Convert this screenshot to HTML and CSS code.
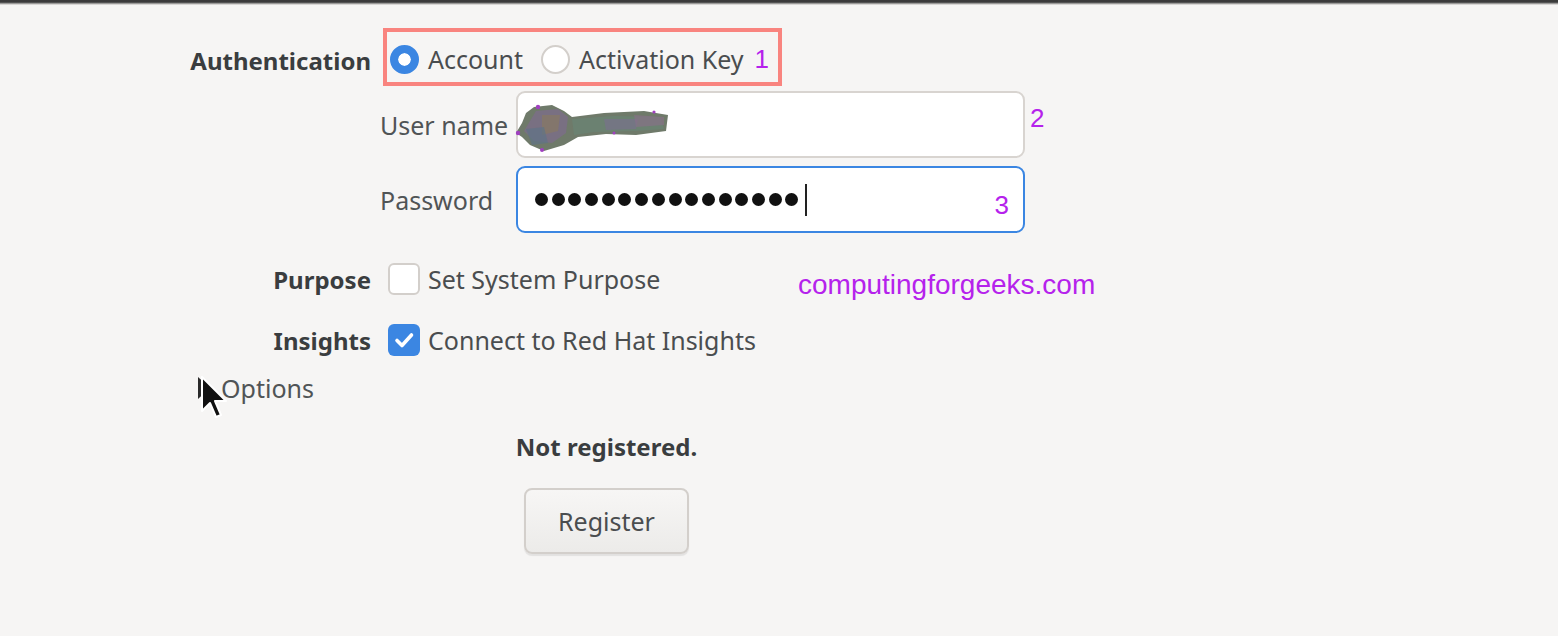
FILE: index.html
```html
<!DOCTYPE html>
<html lang="en">
<head>
<meta charset="utf-8">
<title>Registration</title>
<link rel="stylesheet" href="styles.css">
</head>
<body>
<div class="topbar"></div>
<main class="page">
  <div class="row auth-row">
    <span class="label">Authentication</span>
    <div class="radio-group">
      <span class="radio checked"><span class="radio-dot"></span>Account</span>
      <span class="radio"><span class="radio-dot"></span>Activation Key</span>
      <span class="note">1</span>
    </div>
  </div>

  <div class="row creds-row">
    <span class="label"></span>
    <div class="creds">
      <span class="clabel">User name</span>
      <div class="entry-wrap">
        <div class="entry">
          <svg class="scribble" width="160" height="50" viewBox="0 0 160 50">
            <path d="M20 4 L38 2 L50 8 L58 14 L90 10 L130 8 L154 12 L152 28 L122 32 L92 31 L64 34 L50 42 L30 48 L16 42 L8 34 L2 30 L8 20 L12 10 Z" fill="#6f7a6a"/>
            <path d="M22 8 L44 6 L54 14 L52 30 L38 40 L20 38 L10 28 Z" fill="#7b6f86" opacity="0.85"/>
            <path d="M58 16 L100 13 L146 14 L150 26 L122 28 L80 29 L60 32 Z" fill="#6a8272" opacity="0.9"/>
            <path d="M28 12 L46 12 L44 28 L28 32 Z" fill="#8a7a5e" opacity="0.6"/>
            <path d="M90 16 L124 16 L122 26 L92 27 Z" fill="#7a7090" opacity="0.6"/>
            <path d="M12 26 L30 24 L34 40 L18 42 Z" fill="#5f7386" opacity="0.7"/>
            <path d="M120 12 L150 14 L150 22 L122 24 Z" fill="#8a6f8a" opacity="0.6"/>
            <circle cx="24" cy="4" r="2.2" fill="#a040c0"/>
            <circle cx="4" cy="30" r="2.2" fill="#a040c0"/>
            <circle cx="28" cy="47" r="2" fill="#a040c0"/>
            <circle cx="140" cy="9" r="1.6" fill="#a040c0"/>
            <circle cx="100" cy="30" r="1.5" fill="#a040c0"/>
          </svg>
        </div>
        <span class="note note-2">2</span>
      </div>
      <span class="clabel">Password</span>
      <div class="entry-wrap">
        <div class="entry focused">
          <div class="dots">
            <i></i><i></i><i></i><i></i><i></i><i></i><i></i><i></i>
            <i></i><i></i><i></i><i></i><i></i><i></i><i></i><i></i>
          </div>
          <span class="caret"></span>
          <span class="note note-3">3</span>
        </div>
      </div>
    </div>
  </div>

  <div class="row purpose-row">
    <span class="label">Purpose</span>
    <span class="check"><span class="box"></span>Set System Purpose</span>
  </div>

  <div class="row insights-row">
    <span class="label">Insights</span>
    <span class="check"><span class="box checked">
      <svg width="32" height="32" viewBox="0 0 32 32"><path d="M9 16.5 L14 21.5 L23.5 11" fill="none" stroke="#fff" stroke-width="3.6" stroke-linecap="round" stroke-linejoin="round"/></svg>
    </span>Connect to Red Hat Insights</span>
  </div>

  <div class="options-row">
    <span class="expander"></span>
    <span class="options-text">Options</span>
    <svg class="pointer" width="30" height="46" viewBox="0 0 30 46">
      <path d="M3 2 L3 36 L11 28 L17 42 L22 40 L16 26 L27 26 Z" fill="#111" stroke="#fff" stroke-width="2" stroke-linejoin="round"/>
    </svg>
  </div>

  <div class="status">
    <span class="status-text">Not registered.</span>
    <button class="btn" type="button">Register</button>
  </div>

  <span class="watermark">computingforgeeks.com</span>
</main>
</body>
</html>
```

FILE: styles.css
```css
* { box-sizing: border-box; }
html, body { margin: 0; padding: 0; }
body {
  background: #f6f5f4;
  font-family: "Noto Sans", "Open Sans", sans-serif;
  font-size: 25px;
  color: #4a4d4f;
  width: 1558px;
  height: 636px;
  overflow: hidden;
}
.topbar {
  height: 5px;
  background: linear-gradient(#3b3b3b 0, #3b3b3b 2px, #6e6e6e 3px, #c8c6c4 4px, #e8e6e4 5px);
}
.page {
  position: relative;
  padding-top: 23px;
}
.row {
  display: flex;
  align-items: center;
}
.label {
  width: 371px;
  flex: none;
  text-align: right;
  font-weight: 700;
  font-size: 24px;
  color: #3a3d3f;
}
.auth-row { height: 58px; }
.auth-row .label { padding-top: 6px; }
.radio-group {
  display: flex;
  align-items: center;
  margin-left: 12px;
  height: 58px;
  border: 4px solid #f9847f;
  padding: 4px 9px 0 3px;
}
.radio {
  display: flex;
  align-items: center;
  margin-right: 18px;
}
.radio-dot {
  width: 29px;
  height: 29px;
  border-radius: 50%;
  background: #fff;
  border: 2px solid #d3cfcb;
  margin-right: 9px;
  flex: none;
}
.radio.checked .radio-dot {
  background: #3b86e2;
  border: 8px solid #3b86e2;
  box-shadow: inset 0 0 0 10px #fff;
}
.note {
  color: #b522ec;
  font-family: "Liberation Sans", Arial, sans-serif;
  font-size: 26px;
}
.radio-group .note { margin-left: -7px; }

.creds-row { margin-top: 5px; }
.creds {
  margin-left: 9px;
  display: grid;
  grid-template-columns: 136px 509px;
  row-gap: 8px;
  align-items: center;
}
.clabel { color: #505456; }
.entry-wrap { position: relative; }
.entry {
  position: relative;
  height: 67px;
  background: #fff;
  border: 2px solid #d8d4d0;
  border-radius: 9px;
  display: flex;
  align-items: center;
}
.entry.focused { border-color: #3b86e2; }
.scribble { margin-left: -4px; margin-top: 6px; }
.note-2 {
  position: absolute;
  left: 514px;
  top: 12px;
}
.note-3 {
  position: absolute;
  right: 14px;
  top: 22px;
}
.dots {
  display: flex;
  gap: 3.7px;
  margin-left: 17px;
}
.dots i {
  display: block;
  width: 13px;
  height: 13px;
  border-radius: 50%;
  background: #111;
}
.caret {
  width: 2px;
  height: 32px;
  background: #222;
  margin-left: 7px;
}

.check {
  display: flex;
  align-items: center;
  margin-left: 17px;
}
.box {
  width: 32px;
  height: 32px;
  border: 2px solid #d3cfcb;
  border-radius: 6px;
  background: #fff;
  margin-right: 8px;
  flex: none;
  display: flex;
  align-items: center;
  justify-content: center;
}
.box.checked {
  background: #3b86e2;
  border: none;
}
.purpose-row { margin-top: 29px; height: 34px; }
.insights-row { margin-top: 27px; height: 34px; }

.options-row {
  position: relative;
  display: flex;
  align-items: center;
  height: 34px;
  margin-top: 14px;
  padding-left: 198px;
}
.expander {
  width: 0;
  height: 0;
  border-top: 11px solid transparent;
  border-bottom: 11px solid transparent;
  border-left: 12px solid #2a2a2a;
  margin-right: 11px;
}
.options-text { color: #505456; }
.pointer {
  position: absolute;
  left: 199px;
  top: 4px;
}

.status {
  width: 453px;
  margin-left: 380px;
  margin-top: 26px;
  display: flex;
  flex-direction: column;
  align-items: center;
}
.status-text {
  font-weight: 700;
  font-size: 24px;
  color: #3a3d3f;
  line-height: 32px;
}
.btn {
  margin-top: 25px;
  width: 165px;
  height: 66px;
  font: inherit;
  color: #4a4d4f;
  background: linear-gradient(#f7f6f5, #ecebe9);
  border: 2px solid #d3cfcb;
  border-radius: 8px;
  box-shadow: 0 2px 1px rgba(0,0,0,0.08);
}

.watermark {
  position: absolute;
  left: 798px;
  top: 264px;
  color: #b522ec;
  font-family: "Liberation Sans", Arial, sans-serif;
  font-size: 28px;
}
```
